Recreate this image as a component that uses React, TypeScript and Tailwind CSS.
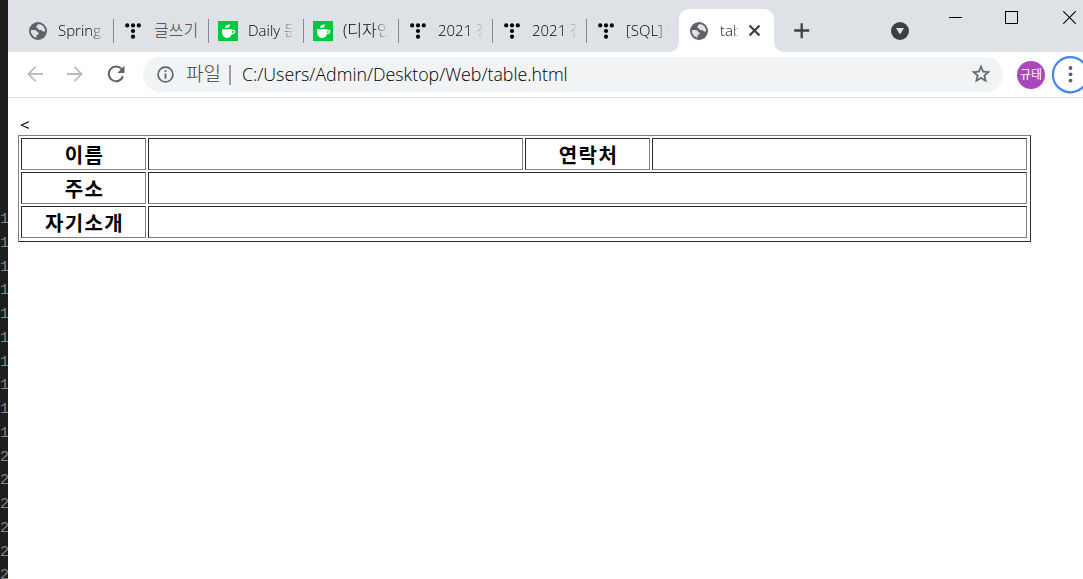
import { ReactNode } from 'react';
import clsx from 'clsx';

const GlobeIcon = () => (
    <svg viewBox="0 0 18 18" className="h-[18px] w-[18px] shrink-0">
        <circle cx="9" cy="9" r="9" fill="#5f6368" />
        <path
            fill="#dee1e6"
            d="M9.8 1.9c-.5.5-1.7.7-1.7 1.6 0 .8-.9.9-.9 1.6 0 .9 1.3.9 1.9 1.5.5.5.2 1.3 1 1.5 1.2.2 2.3-.1 3.1.6.8.7 1.2 1 2.9.9A7.2 7.2 0 0 0 9.8 1.9zM1.9 8.2c1.8-.1 4-.2 5.2.4.8.4.7 1.4 1.6 1.6 1.1.2 1.3.9.8 1.7-.5.8-1.7.5-2 1.3-.3.9.4 1.5-.1 2.6A7.2 7.2 0 0 1 1.9 8.2z"
        />
    </svg>
);

const TistoryIcon = () => (
    <svg viewBox="0 0 16 16" className="h-4 w-4 shrink-0">
        <circle cx="2.2" cy="2.4" r="2.1" />
        <circle cx="8" cy="2.4" r="2.1" />
        <circle cx="13.8" cy="2.4" r="2.1" />
        <circle cx="8" cy="8" r="2.1" />
        <circle cx="8" cy="13.7" r="2.1" />
    </svg>
);

const CupIcon = () => (
    <svg viewBox="0 0 20 20" className="h-5 w-5 shrink-0">
        <rect width="20" height="20" fill="#03c73c" />
        <path fill="#fff" d="M4 8.3h10.2v.7c1.7-.6 3.1.2 3.1 1.7 0 1.7-1.6 2.7-3.5 2.5-.8 2.3-2.4 3.7-4.7 3.7C5.8 16.9 4 14.2 4 10.5z" />
        <path fill="#03c73c" d="M14.2 10.2c1-.5 1.8-.2 1.8.5 0 .8-.8 1.3-1.9 1.2z" />
        <path fill="#fff" d="M7.1 7c-.2-2.4 1.5-3.7 5-3.6C12 5.7 10.5 7.1 7.1 7z" />
    </svg>
);

type TabProps = { icon: ReactNode; title: string; className: string; titleClass: string };

const Tab = ({ icon, title, className, titleClass }: TabProps) => (
    <div className={clsx('flex h-6 shrink-0 items-center border-r border-[#85898e]', className)}>
        {icon}
        <span className={clsx('h-6 overflow-hidden whitespace-nowrap leading-[22px]', titleClass)}>
            {title}
        </span>
    </div>
);

const fade = 'text-black [mask-image:linear-gradient(to_right,black_65%,transparent)]';

const tabs: TabProps[] = [
    { icon: <GlobeIcon />, title: 'Spring', className: 'w-[93px] pl-2', titleClass: `ml-[11px] w-[48px] text-[15px] ${fade}` },
    { icon: <TistoryIcon />, title: '글쓰기', className: 'w-[95px] pl-[11px]', titleClass: 'ml-[13px] w-[45px] text-[16px] text-[#3c4043]' },
    { icon: <CupIcon />, title: 'Daily 문제', className: 'w-[95px] pl-[9px]', titleClass: `ml-[10px] w-[46px] text-[15px] ${fade}` },
    { icon: <CupIcon />, title: '(디자인', className: 'w-[95px] pl-[9px]', titleClass: `ml-[10px] w-[45px] text-[16px] ${fade}` },
    { icon: <TistoryIcon />, title: '2021 정보', className: 'w-[94px] pl-[11px]', titleClass: `ml-3 w-[45px] text-[15px] ${fade}` },
    { icon: <TistoryIcon />, title: '2021 정보', className: 'w-[94px] pl-[11px]', titleClass: `ml-3 w-[45px] text-[15px] ${fade}` },
    { icon: <TistoryIcon />, title: '[SQL] 문', className: 'w-[92px] border-r-0 pl-[11px]', titleClass: `ml-3 w-[44px] text-[15px] ${fade}` },
];

const gutter = [1, 1, 1, 1, 1, 1, 1, 1, 1, 1, 2, 2, 2, 2, 2, 2];

const TabStrip = () => (
    <div className="flex h-[52px] items-start bg-[#dee1e6] pl-[13px]">
        <div className="flex pt-[19px]">
            {tabs.map((tab, i) => (
                <Tab key={i} {...tab} />
            ))}
        </div>
        <div className="relative mt-[9px] flex h-[43px] w-[95px] shrink-0 items-center rounded-t-[10px] bg-white pl-[11px]">
            <svg viewBox="0 0 10 10" className="absolute bottom-0 -left-[10px] h-[10px] w-[10px]">
                <path fill="#fff" d="M10 0v10H0A10 10 0 0 0 10 0z" />
            </svg>
            <svg viewBox="0 0 10 10" className="absolute -right-[10px] bottom-0 h-[10px] w-[10px]">
                <path fill="#fff" d="M0 0v10h10A10 10 0 0 1 0 0z" />
            </svg>
            <GlobeIcon />
            <span className="ml-3 h-6 w-[19px] overflow-hidden text-[15px] leading-[22px] text-black [mask-image:linear-gradient(to_right,black_70%,transparent)]">
                table
            </span>
            <svg viewBox="0 0 10 10" className="ml-[10px] h-[11px] w-[11px] shrink-0" stroke="#3c4043" strokeWidth="2">
                <path d="M.5.5l9 9M9.5.5l-9 9" />
            </svg>
        </div>
        <svg viewBox="0 0 16 16" className="mt-[23px] ml-5 h-4 w-4 shrink-0" stroke="#3c4043" strokeWidth="2.3">
            <path d="M7.7.3v15M.2 7.5h15" />
        </svg>
        <svg viewBox="0 0 18 18" className="mt-[22px] ml-[81px] h-[18px] w-[18px] shrink-0">
            <circle cx="9" cy="9" r="9" fill="#3c4043" />
            <path fill="#dee1e6" d="M5 6h8l-4 6.5z" />
        </svg>
        <div className="mt-[17px] ml-10 h-px w-[13px] shrink-0 bg-black" />
        <div className="mt-[11px] ml-[43px] h-[13px] w-[13px] shrink-0 border border-black" />
        <svg viewBox="0 0 13 13" className="mt-[11px] ml-[45px] h-[13px] w-[13px] shrink-0" stroke="#000" strokeWidth="1.1">
            <path d="M.3.3l12.4 12.4M12.7.3L.3 12.7" />
        </svg>
    </div>
);

const Toolbar = () => (
    <div className="flex h-[46px] items-center overflow-hidden border-b border-[#d9dbde] pl-[19px]">
        <svg viewBox="0 0 16 16" className="-mt-px h-4 w-4 shrink-0" fill="none" stroke="#babcbe" strokeWidth="1.8">
            <path d="M16 8H1.5M8.5.9L1.4 8l7.1 7.1" />
        </svg>
        <svg viewBox="0 0 16 16" className="-mt-px ml-6 h-4 w-4 shrink-0" fill="none" stroke="#babcbe" strokeWidth="1.8">
            <path d="M0 8h14.5M7.5.9L14.6 8l-7.1 7.1" />
        </svg>
        <svg viewBox="0 0 18 18" className="-mt-px ml-6 h-[18px] w-[18px] shrink-0">
            <path fill="none" stroke="#5f6368" strokeWidth="2" d="M14.7 4.2A7.3 7.3 0 1 0 16 11.3" />
            <path fill="#5f6368" d="M17.5.8v7.2h-7.2z" />
        </svg>
        <div className="ml-[18px] flex h-[35px] w-[860px] shrink-0 items-center rounded-full bg-[#f1f3f4] pl-[14px]">
            <svg viewBox="0 0 17 17" className="h-[17px] w-[17px] shrink-0">
                <circle cx="8.5" cy="8.5" r="7.4" fill="none" stroke="#5f6368" strokeWidth="1.7" />
                <path fill="#5f6368" d="M7.6 4.2h1.8V6H7.6zM7.6 7.4h1.8v5.4H7.6z" />
            </svg>
            <span className="-mt-0.5 ml-3 w-9 shrink-0 whitespace-nowrap text-[19px] leading-6 text-[#3c4043]">파일</span>
            <div className="ml-[7px] h-5 w-[2px] bg-[#9a9da1]" />
            <span className="-mt-px ml-[11px] w-[326px] shrink-0 whitespace-nowrap text-[17.8px] leading-6 text-black">
                C:/Users/Admin/Desktop/Web/table.html
            </span>
            <svg viewBox="0 0 24 24" className="-mt-px ml-[401.5px] h-[22px] w-[22px] shrink-0" fill="#5f6368" stroke="#5f6368" strokeWidth=".3">
                <path d="M22 9.24l-7.19-.62L12 2 9.19 8.63 2 9.24l5.46 4.73L5.82 21 12 17.27 18.18 21l-1.63-7.03L22 9.24zM12 15.4l-3.76 2.27 1-4.28-3.32-2.88 4.38-.38L12 6.1l1.71 4.04 4.38.38-3.32 2.88 1 4.28L12 15.4z" />
            </svg>
        </div>
        <div className="ml-[14px] flex h-7 w-7 shrink-0 items-center justify-center rounded-full bg-[#ab47bc] text-[12px] leading-none font-normal text-white">
            규태
        </div>
        <svg viewBox="0 0 38 38" className="ml-[7px] h-[38px] w-[38px] shrink-0">
            <circle cx="18.5" cy="18.7" r="17.6" fill="none" stroke="#4285f4" strokeWidth="2.2" />
            <circle cx="18.5" cy="12" r="1.9" fill="#5f6368" />
            <circle cx="18.5" cy="18.3" r="1.9" fill="#5f6368" />
            <circle cx="18.5" cy="24.6" r="1.9" fill="#5f6368" />
        </svg>
    </div>
);

const Cell = ({ children, className }: { children?: ReactNode; className?: string }) => (
    <div
        className={clsx(
            'flex h-8 items-center justify-center border border-t-[#2c2c2c] border-r-[#808080] border-b-[#808080] border-l-[#2c2c2c] pt-[3px] pl-[2px] text-[20px] leading-none font-bold tracking-[1.4px] text-black',
            className,
        )}
    >
        {children}
    </div>
);

export default function App() {
    return (
        <div className="flex h-[579px] w-[1083px] overflow-hidden bg-white font-['Open_Sans','Noto_Sans_CJK_KR',sans-serif] font-light">
            <div className="w-2 shrink-0 overflow-hidden bg-[#1e1e1e] pt-[208px] font-['Liberation_Mono',monospace] text-[15px] leading-[23.75px] font-normal text-[#858585]">
                {gutter.map((n, i) => (
                    <div key={i}>{n}</div>
                ))}
            </div>
            <div className="w-[1075px] shrink-0">
                <TabStrip />
                <Toolbar />
                <div className="pt-4 pl-[10px]">
                    <div className="h-[21px] pl-0.5 text-[17px] leading-[21px] font-normal text-black">&lt;</div>
                    <div className="grid w-[1013px] grid-cols-[125px_375px_125px_375px] gap-0.5 border border-t-[#808080] border-r-[#2c2c2c] border-b-[#2c2c2c] border-l-[#808080] pt-0.5 pr-[3px] pb-[3px] pl-0.5">
                        <Cell>이름</Cell>
                        <Cell />
                        <Cell>연락처</Cell>
                        <Cell />
                        <Cell>주소</Cell>
                        <Cell className="col-span-3" />
                        <Cell>자기소개</Cell>
                        <Cell className="col-span-3" />
                    </div>
                </div>
            </div>
        </div>
    );
}
